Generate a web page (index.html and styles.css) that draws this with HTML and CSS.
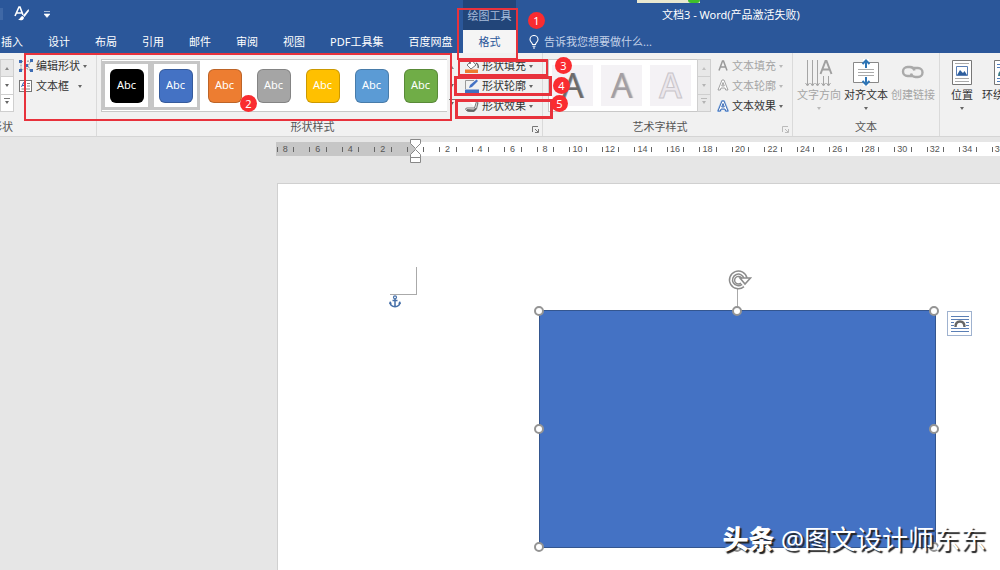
FILE: index.html
```html
<!DOCTYPE html>
<html lang="zh-CN">
<head>
<meta charset="utf-8">
<title>文档3 - Word</title>
<link rel="stylesheet" href="styles.css">
</head>
<body>
<div class="app">
  <header class="header">
    <div class="titlebar">
      <div class="quick">
        <span class="quick-edge"></span>
        <button class="icon-btn" aria-label="格式刷">
          <svg width="16" height="16" viewBox="0 0 16 16"><path d="M1 10 5 1h1l3 8M2.500 7h5" fill="none" stroke="#fff" stroke-width="1.600"/><path d="M14.500 3 9 9.500l1.500 1.500L15 5zM8.500 10c-2 0-2 3-4.500 3.500 2 1.500 6 1 6-2z" fill="#fff"/></svg>
        </button>
        <button class="icon-btn" aria-label="自定义快速访问工具栏">
          <svg width="6" height="7" viewBox="0 0 6 7"><path d="M0 .500h6M0 3h6L3 6.500z" fill="#fff" stroke="#fff" stroke-width=".6"/></svg>
        </button>
      </div>
      <h1 class="doc-title">文档3 - Word(产品激活失败)</h1>
      <div class="float-chip"><span class="float-dot"></span></div>
    </div>
    <div class="tabrow">
      <nav class="tabs">
        <button>插入</button><button>设计</button><button>布局</button><button>引用</button><button>邮件</button><button>审阅</button><button>视图</button><button>PDF工具集</button><button>百度网盘</button>
      </nav>
      <div class="context">
        <span class="context-title">绘图工具</span>
        <button class="context-tab">格式</button>
      </div>
      <button class="tellme">
        <svg width="10" height="14" viewBox="0 0 10 14"><path d="M3.500 9.500C3.500 7.500 1 7 1 4.500a4 4 0 0 1 8 0C9 7 6.500 7.500 6.500 9.500zM3.500 11.200h3M4 13h2" fill="none" stroke="#fff" stroke-width="1.100"/></svg>
        <span>告诉我您想要做什么...</span>
      </button>
    </div>
  </header>

  <section class="ribbon">
    <div class="group g-insert">
      <div class="group-body">
        <div class="scroll wide"><button class="off" aria-label="上一行"><i class="up"></i></button><button aria-label="下一行"><i class="down"></i></button><button aria-label="更多"><i class="down more"></i></button></div>
        <div class="rows">
          <button class="row"><svg width="14" height="14" viewBox="0 0 14 14"><path d="M2 2.500 12 2M2 2.500 2 11.500 7 9l5 3L9 7l3-5" fill="none" stroke="#8a8a8a" stroke-dasharray="2 1"/><path d="M0 1h3v3H0zM11 0h3v3h-3zM0 10h3v3H0zM11 10h3v3h-3zM6 5h3v3H6z" fill="#3e6db5"/></svg><span>编辑形状</span><i class="down"></i></button>
          <button class="row"><svg width="14" height="14" viewBox="0 0 14 14"><rect x=".5" y="1.500" width="12" height="11" fill="#fff" stroke="#777"/><path d="M2.500 8 4.500 3.500 6.500 8M3 6.500h3" fill="none" stroke="#3e6db5"/><path d="M8 4.500h3M8 7h3M2.500 10h8.500" stroke="#888"/></svg><span>文本框</span><i class="down"></i></button>
        </div>
      </div>
      <div class="group-label">插入形状</div>
    </div>

    <div class="group g-styles">
      <div class="group-body">
        <div class="gallery">
          <button class="tile on"><span class="swatch black">Abc</span></button>
          <button class="tile on"><span class="swatch blue">Abc</span></button>
          <button class="tile"><span class="swatch orange">Abc</span></button>
          <button class="tile"><span class="swatch gray">Abc</span></button>
          <button class="tile"><span class="swatch gold">Abc</span></button>
          <button class="tile"><span class="swatch sky">Abc</span></button>
          <button class="tile"><span class="swatch green">Abc</span></button>
        </div>
        <div class="scroll"><button aria-label="上一行"><i class="up"></i></button><button aria-label="下一行"><i class="down"></i></button><button aria-label="更多"><i class="down more"></i></button></div>
        <div class="rows">
          <button class="row"><svg width="14" height="14" viewBox="0 0 14 14"><path d="M2 6 7 1.500 11 6 6 10z" fill="#fff" stroke="#777"/><path d="M5 5V1.500q1.500-2 2.500 0M11 4q3 1 2 5" fill="none" stroke="#555" stroke-width="1.300"/><path d="M0 10.500h13V14H0z" fill="#ed7d31"/></svg><span>形状填充</span><i class="down"></i></button>
          <button class="row"><svg width="14" height="14" viewBox="0 0 14 14"><path d="M.500 10V1.500H9" fill="none" stroke="#999"/><path d="m4 9 1-3 6.500-5.500 1.500 1.500L7 8z" fill="#4472c4"/><path d="M0 10.500h14V14H0z" fill="#3e6fc0"/></svg><span>形状轮廓</span><i class="down"></i></button>
          <button class="row"><svg width="14" height="14" viewBox="0 0 14 14"><path d="M3 10.500 12 10l1.500-6-1-2-1.500 8z" fill="#777"/><path d="M4 2.500h7.500L9.500 9H2q-2 0-1 2 1 1.500 3 1.500h5l2-3" fill="#fff" stroke="#777"/><path d="m2 11 7 .500 2-2" fill="none" stroke="#666" stroke-width="2"/></svg><span>形状效果</span><i class="down"></i></button>
        </div>
      </div>
      <div class="group-label">形状样式</div>
      <svg class="launcher" width="7" height="7" viewBox="0 0 7 7"><path d="M.500 6V.500H6M3 3l3 3M6.500 3v3.500H3" fill="none" stroke="#777"/></svg>
    </div>

    <div class="group g-art">
      <div class="group-body">
        <div class="gallery art">
          <button class="art-tile a1">A</button><button class="art-tile a2">A</button><button class="art-tile a3">A</button>
        </div>
        <div class="scroll wide dim"><button class="off" aria-label="上一行"><i class="up"></i></button><button class="off" aria-label="下一行"><i class="down"></i></button><button class="off" aria-label="更多"><i class="down more"></i></button></div>
        <div class="rows">
          <button class="row dim"><svg width="12" height="14" viewBox="0 0 12 14"><path d="M2 11.500 5.500 2h1L10 11.500M3.300 8h5.400" fill="none" stroke="#999" stroke-width="1.500"/></svg><span>文本填充</span><i class="down"></i></button>
          <button class="row dim"><svg width="12" height="14" viewBox="0 0 12 14"><path d="M1 11 5 1h2l4 10H8.700L8 9H4l-.700 2zM4.700 7h2.600L6 3.500z" fill="#fff" stroke="#999" stroke-width=".9"/></svg><span>文本轮廓</span><i class="down"></i></button>
          <button class="row"><svg width="12" height="14" viewBox="0 0 12 14"><path d="M1 12 5 2h2l4 10H8.700L8 10H4l-.700 2zM4.700 8h2.600L6 4.500z" fill="#fff" stroke="#a9c8ee" stroke-width="2.200"/><path d="M1 12 5 2h2l4 10H8.700L8 10H4l-.700 2zM4.700 8h2.600L6 4.500z" fill="#fff" stroke="#3e6db5"/></svg><span>文本效果</span><i class="down"></i></button>
        </div>
      </div>
      <div class="group-label">艺术字样式</div>
      <svg class="launcher" width="7" height="7" viewBox="0 0 7 7"><path d="M.500 6V.500H6M3 3l3 3M6.500 3v3.500H3" fill="none" stroke="#bbb"/></svg>
    </div>

    <div class="group g-text">
      <div class="group-body">
        <button class="big dim"><svg width="28" height="28" viewBox="0 0 28 28"><path d="M2.500 1v25M7.500 1v25M12.500 1v25M18.500 17v9M23.500 17v9" stroke="#a5a5a5"/><path d="m.500 24 2 3 2-3m1 0 2 3 2-3m1 0 2 3 2-3m2 0 2 3 2-3m1 0 2 3 2-3" fill="none" stroke="#a5a5a5"/><path d="m15.500 15 5-13h1l5 13M17 10.500h8" fill="none" stroke="#a0a0a0" stroke-width="2"/></svg><span>文字方向</span><i class="down"></i></button>
        <button class="big"><svg width="26" height="28" viewBox="0 0 26 28"><path d="M.500 3.500h25v20H.500z" fill="#fff" stroke="#888"/><path d="M5 10.500h16M5 13.500h16M5 16.500h16" stroke="#aaa"/><path d="M10 0h6v8h-6zM10 19h6v8h-6z" fill="#fff"/><path d="M13 9V2M9.500 5 13 1.500 16.500 5M13 18v7M9.500 22l3.500 3.500 3.500-3.500" fill="none" stroke="#2e75b6" stroke-width="2"/></svg><span>对齐文本</span><i class="down"></i></button>
        <button class="big dim"><svg width="28" height="28" viewBox="0 0 28 28"><path d="M13 17H8.500a4.500 4.500 0 0 1 0-9H11q3.500 0 4.500 3.500M14.500 9H19a4.500 4.500 0 0 1 0 9h-2.500q-3.500 0-4.500-3.500" fill="none" stroke="#aaa" stroke-width="2.400"/></svg><span>创建链接</span></button>
      </div>
      <div class="group-label">文本</div>
    </div>

    <div class="group g-arrange">
      <div class="group-body">
        <button class="big"><svg width="20" height="28" viewBox="0 0 20 28"><path d="M.500 1.500h19v24H.500z" fill="#fff" stroke="#777"/><path d="M3 4.500h14M3 19.500h14M3 22.500h14" stroke="#aaa"/><path d="M4.500 7.500h11v9h-11z" fill="#fff" stroke="#5b7fb5"/><path d="m5 16 3-5 3 3 1.500-2 2.500 4z" fill="#2e5f9e"/></svg><span>位置</span><i class="down"></i></button>
        <button class="big"><svg width="20" height="28" viewBox="0 0 20 28"><path d="M.500 1.500h19v24H.500z" fill="#fff" stroke="#777"/><path d="M3 5.500h14M3 8.500h14M3 19.500h14M3 22.500h14" stroke="#4f7dbb"/><path d="M4 17q0-6 6-6t6 6h-3q0-3-3-3t-3 3z" fill="#3b7a86"/></svg><span>环绕文字</span></button>
      </div>
      <div class="group-label">&nbsp;</div>
    </div>
  </section>

  <main class="workspace">
    <div class="ruler">
      <div class="marks">
        <span class="m">8</span><span class="m">6</span><span class="m">4</span><span class="m">2</span><span class="m zero"></span><span class="m">2</span><span class="m">4</span><span class="m">6</span><span class="m">8</span><span class="m">10</span><span class="m">12</span><span class="m">14</span><span class="m">16</span><span class="m">18</span><span class="m">20</span><span class="m">22</span><span class="m">24</span><span class="m">26</span><span class="m">28</span><span class="m">30</span><span class="m">32</span><span class="m">34</span><span class="m">36</span>
      </div>
    </div>
    <svg class="indent" width="11" height="25" viewBox="0 0 11 25"><path d="M.500.500h10v4L5.500 9.500l-5-5zM.500 18.500v-3l5-5 5 5v3zM.500 18.500h10v5H.500z" fill="#fff" stroke="#888"/></svg>
    <div class="page">
      <span class="crop-mark"></span>
      <svg class="anchor" width="12" height="13" viewBox="0 0 12 13"><circle cx="6" cy="2.300" r="1.500" fill="none" stroke="#456fa8" stroke-width="1.200"/><path d="M6 4v8M3.500 5.500h5M1 7.500q.500 4 5 4.200 4.500-.200 5-4.200" fill="none" stroke="#456fa8" stroke-width="1.500"/><path d="m0 9 1-3 2 2.500zM12 9l-1-3-2 2.500z" fill="#456fa8"/></svg>
      <div class="shape">
        <span class="stem"></span>
        <svg class="rotate" width="24" height="20" viewBox="0 0 24 20"><path d="M15 15.500A7.300 7.300 0 1 1 17.500 8.500" fill="none" stroke="#8c8c8c" stroke-width="4.600"/><path d="M15 15.500A7.300 7.300 0 1 1 17.500 8.500" fill="none" stroke="#fff" stroke-width="1.600"/><path d="M12 8h10.500L17 14z" fill="#fff" stroke="#8c8c8c" stroke-width="1.600"/><path d="M13 13a3.800 3.800 0 1 1 .5-5" fill="none" stroke="#8c8c8c" stroke-width="1.400"/></svg>
        <i class="h nw"></i><i class="h n"></i><i class="h ne"></i><i class="h w"></i><i class="h e"></i><i class="h sw"></i><i class="h s"></i><i class="h se"></i>
        <button class="layout-btn" aria-label="布局选项"><svg width="18" height="18" viewBox="0 0 18 18"><path d="M0 1.500h18M0 4.500h18M0 7.500h3M15 7.500h3M0 10.500h3M15 10.500h3M0 13.500h18M0 16.500h18" stroke="#5b7fb5"/><path d="M4.500 12q0-5.500 4.500-5.500t4.500 5.500" fill="none" stroke="#666" stroke-width="2.400"/></svg></button>
      </div>
    </div>
  </main>

  <div class="notes">
    <span class="box b1"></span><span class="box b2"></span><span class="box b3"></span><span class="box b4"></span><span class="box b5"></span>
    <span class="num n1">1</span><span class="num n2">2</span><span class="num n3">3</span><span class="num n4">4</span><span class="num n5">5</span>
    <div class="watermark"><strong>头条</strong><span>@图文设计师东东</span></div>
  </div>
</div>
</body>
</html>
```
FILE: styles.css
```css
* { box-sizing: border-box; }
body {
  margin: 0;
  font: 11px/16px "Noto Sans", "Noto Sans CJK SC", sans-serif;
  color: #444;
  background: #e6e6e6;
}
button {
  font: inherit;
  color: inherit;
  background: none;
  border: 0;
  padding: 0;
  white-space: nowrap;
}
svg { display: block; flex: none; }
.app {
  position: relative;
  display: flex;
  flex-direction: column;
  min-height: 100vh;
  overflow: hidden;
}

/* Title bar and tabs */
.header { background: #2b579a; color: #fff; }
.titlebar { position: relative; display: flex; height: 30px; }
.quick { display: flex; align-items: center; gap: 14px; flex: 1; padding-bottom: 2px; }
.quick-edge { width: 3px; height: 12px; background: #3f68a6; margin-right: -3px; }
.doc-title {
  flex: 0 0 338px;
  margin: 0;
  font-size: 11px;
  font-weight: 400;
  line-height: 30px;
}
.float-chip {
  position: absolute;
  top: 0;
  left: 637px;
  width: 63px;
  height: 3px;
  background: #e9e8d0;
}
.float-dot {
  position: absolute;
  right: 0;
  width: 12px;
  height: 3px;
  border-radius: 0 0 6px 6px;
  background: #3fc02b;
}
.tabrow { display: flex; height: 23px; line-height: 23px; }
.tabs { display: flex; gap: 25px; flex: 0 0 463px; padding-left: 1px; }
.context {
  display: flex;
  flex-direction: column;
  width: 53px;
  margin-top: -30px;
  position: relative;
}
.context-title { height: 30px; line-height: 31px; background: #224579; color: #a9bddb; text-align: center; }
.context-tab { height: 23px; background: #f5f5f5; color: #2b579a; }
.tellme { display: flex; align-items: center; gap: 5px; margin-left: 13px; color: #c3d1e8; }

/* Ribbon */
.ribbon {
  display: flex;
  background: #f1f1f1;
  border-bottom: 1px solid #d5d5d5;
  overflow: hidden;
}
.group {
  position: relative;
  flex: none;
  display: flex;
  flex-direction: column;
  border-right: 1px solid #dadada;
  padding-top: 3px;
}
.group-body { display: flex; height: 62px; align-items: flex-start; }
.group-label { text-align: center; line-height: 18px; color: #555; }
.g-insert { width: 97px; }
.g-insert .group-label { margin-left: -31px; width: 44px; }
.g-styles { width: 446px; padding-left: 4px; }
.g-styles .group-label { padding-right: 18px; }
.g-art { width: 250px; padding-left: 5px; }
.g-art .group-label { padding-right: 20px; }
.g-text { width: 147px; }
.g-arrange { border: 0; }
.launcher { position: absolute; right: 3px; bottom: 3px; }

.rows { display: flex; flex-direction: column; }
.row { display: flex; align-items: center; height: 20px; gap: 3px; color: #333; }
.g-insert .rows { margin-left: 5px; }
.g-insert .row:nth-child(2) .down { margin-left: 6px; }
.g-styles .rows { margin-left: 8px; }
.g-art .rows { margin-left: 6px; }
.row.dim, .big.dim { color: #a5a5a5; }
.dim .down, .dim .up { opacity: .4; }

.up, .down { width: 0; height: 0; border: 2px solid transparent; display: block; flex: none; }
.down { border-top: 3px solid #666; border-bottom: 0; }
.up { border-bottom: 3px solid #888; border-top: 0; }
.more { position: relative; }
.more::before { content: ""; position: absolute; left: -3px; top: -6px; width: 6px; height: 1px; background: #777; }

.scroll { display: flex; flex-direction: column; width: 10px; height: 53px; margin-top: 3px; }
.scroll.wide { width: 14px; }
.scroll button { flex: 1; display: flex; align-items: center; justify-content: center; }
.scroll.wide button { border: 1px solid #cfcfcf; background: #fff; }
.scroll.wide button + button { border-top: 0; }
.scroll.wide .off { background: #e8e8e8; }

.gallery { display: flex; height: 53px; margin-top: 3px; background: #fff; border: 1px solid #c8c8c8; border-right: 0; padding: 1px 2px 1px 0; }
.tile { display: flex; align-items: center; justify-content: center; width: 49px; border: 3px solid #fff; }
.tile.on { border-color: #c6c6c6; }
.swatch { width: 34px; height: 34px; border-radius: 6px; color: #fff; line-height: 30px; border: 1px solid rgba(0, 0, 0, .2); }
.black { background: #000; }
.blue { background: #4472c4; }
.orange { background: #ed7d31; }
.gray { background: #a5a5a5; }
.gold { background: #ffc000; }
.sky { background: #5b9bd5; }
.green { background: #70ad47; }
.gallery.art { gap: 8px; align-items: center; width: 149px; padding: 1px 3px; }
.art-tile { width: 41px; height: 41px; background: #f4f2f5; font: 34px/41px "Open Sans", sans-serif; }
.a1 { color: #6b6b6b; text-shadow: 1px 0 0 #999; }
.a2 { color: #a39fa4; text-shadow: 1px 0 1px #bbb; }
.a3 { color: #ebe7ec; -webkit-text-stroke: 1px #c9c5ca; font-weight: 600; }

.g-text .group-body { padding-left: 4px; gap: 3px; }
.g-arrange .group-body { padding-left: 11px; gap: 9px; }
.big { display: flex; flex-direction: column; align-items: center; margin-top: 3px; color: #333; }
.big .down { margin-top: 4px; }

/* Document area */
.workspace { position: relative; flex: 1; display: flex; flex-direction: column; padding-top: 5px; }
.ruler {
  margin-left: 276px;
  height: 14px;
  overflow: hidden;
  background: linear-gradient(to right, #c6c6c6 139px, #fff 139px);
}
.marks { display: grid; grid-template-columns: repeat(23, 1fr); margin: 0 -16px 0 -7px; }
.m {
  display: flex;
  justify-content: center;
  align-items: center;
  height: 14px;
  font: 9px/14px "Liberation Sans", sans-serif;
  color: #555;
  position: relative;
}
.m::before, .m::after { content: ""; position: absolute; top: 5px; width: 1px; height: 5px; background: #666; }
.m::before { left: 8px; }
.m::after { right: 7px; }
.indent { position: absolute; left: 410px; top: 2px; }
.page {
  position: relative;
  flex: 1;
  margin: 27px 0 0 277px;
  background: #fff;
  border: 1px solid #d0d0d0;
  border-width: 1px 0 0 1px;
}
.crop-mark { position: absolute; left: 112px; top: 83px; width: 27px; height: 28px; border: 1px solid #aaa; border-width: 0 1px 1px 0; }
.anchor { position: absolute; left: 111px; top: 111px; }
.shape {
  position: absolute;
  left: 261px;
  top: 126px;
  width: 397px;
  height: 238px;
  background: #4472c4;
  border: 1px solid #34568f;
}
.h { position: absolute; width: 10px; height: 10px; margin: -5px -6px; border: 2px solid #949494; border-radius: 50%; background: #fff; }
.nw, .w, .sw { left: 0; }
.n, .s { left: 50%; }
.ne, .e, .se { left: 100%; }
.nw, .n, .ne { top: 0; }
.w, .e { top: 50%; }
.sw, .s, .se { top: 100%; }
.stem { position: absolute; left: 197px; bottom: 100%; width: 1px; height: 22px; background: #aaa; }
.rotate { position: absolute; left: 188px; top: -41px; }
.layout-btn {
  position: absolute;
  left: 407px;
  top: 0;
  display: flex;
  align-items: center;
  justify-content: center;
  width: 25px;
  height: 25px;
  background: #fff;
  border: 1px solid #9fb2cf;
}

/* Annotations drawn over the window */
.notes { position: absolute; inset: 0; pointer-events: none; }
.box { position: absolute; border: 2px solid #e8323c; }
.b1 { left: 457px; top: 8px; width: 61px; height: 52px; }
.b2 { left: 24px; top: 53px; width: 428px; height: 68px; }
.b3 { left: 458px; top: 59px; width: 90px; height: 17px; border-width: 3px 2px 2px; }
.b4 { left: 454px; top: 76px; width: 98px; height: 20px; border-width: 3px; }
.b5 { left: 455px; top: 99px; width: 98px; height: 20px; border-width: 3px; }
.num {
  position: absolute;
  width: 17px;
  height: 17px;
  border-radius: 50%;
  background: #fa2c30;
  color: #fff;
  text-align: center;
  line-height: 17px;
}
.n1 { left: 528px; top: 12px; }
.n2 { left: 240px; top: 95px; }
.n3 { left: 555px; top: 57px; }
.n4 { left: 553px; top: 77px; }
.n5 { left: 551px; top: 95px; }
.watermark {
  position: absolute;
  right: 14px;
  bottom: 13px;
  display: flex;
  gap: 6px;
  font-size: 26px;
  line-height: 36px;
  color: #fff;
  text-shadow: 2px 2px 1px #222;
  white-space: nowrap;
}
.watermark strong { font-weight: 900; }
```
